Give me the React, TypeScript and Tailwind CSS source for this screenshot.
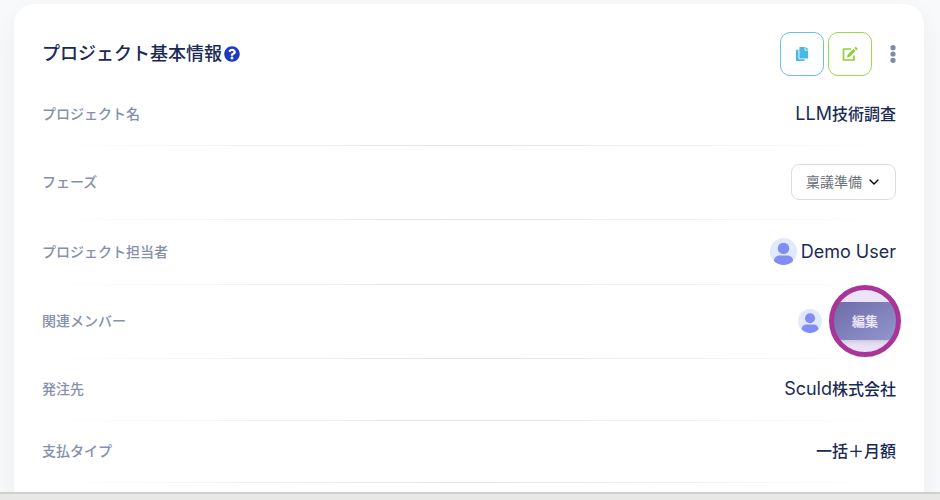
import type { ReactNode } from "react";
import { FaCopy, FaQuestionCircle } from "react-icons/fa";
import { ChevronDown } from "lucide-react";

type RowProps = {
  label: ReactNode;
  children: ReactNode;
};

function Row({ label, children }: RowProps) {
  return (
    <div>
      <div className="flex items-center justify-between pt-[18px] pb-[19px]">
        <dt className="text-sm leading-6 font-medium text-[#8590ad]">{label}</dt>
        <dd className="flex items-center text-base leading-6 font-medium text-[#1b2a55]">{children}</dd>
      </div>
      <div className="h-px bg-linear-to-r from-transparent via-[#e2e4e6] to-transparent" />
    </div>
  );
}

// latin text runs a little larger than the japanese beside it
function Latin({ children }: { children: ReactNode }) {
  return <span className="text-lg leading-6 font-normal">{children}</span>;
}

function Avatar({ className }: { className: string }) {
  return (
    <svg viewBox="0 0 26 26" className={className} aria-hidden="true">
      <circle cx="13" cy="13" r="13" fill="#e0e9fd" />
      <circle cx="13" cy="10" r="5.5" fill="#818cf5" />
      <path d="M3.800 22.200C3.800 18.800 6.500 16.800 9.500 16.800h7c3 0 5.700 2 5.700 5.400A13 13 0 0 1 3.800 22.200Z" fill="#818cf5" />
    </svg>
  );
}

function EditIcon() {
  return (
    <svg viewBox="0 0 16 16" className="size-4" aria-hidden="true">
      <path d="M9 3H1.500v11H12V9.500" fill="none" stroke="currentColor" strokeWidth="1.700" strokeLinejoin="round" />
      <path d="M11.400 2.900l2.200 2.200L7.900 10.800l-3 .8.800-3zM12.200 2.100l.9-.9a.8.800 0 0 1 1.100 0l1.100 1.100a.8.800 0 0 1 0 1.100l-.9.900z" fill="currentColor" />
    </svg>
  );
}

export default function App() {
  return (
    <div className="flex h-screen flex-col overflow-hidden bg-[#f8f9fb] font-[Inter,'Noto_Sans_CJK_JP',sans-serif]">
      <main className="min-h-0 flex-1 overflow-hidden pt-1 pr-4 pl-3.5">
        <section className="rounded-t-[20px] bg-white px-7 pt-7 pb-8 shadow-[0_10px_24px_rgba(0,0,0,0.06)]">
          <header className="mb-2 flex items-center justify-between">
            <h1 className="flex items-center text-lg font-medium text-[#1b2a55]">
              プロジェクト基本情報
              <FaQuestionCircle className="ml-0.5 size-4 text-[#1d39c4]" />
            </h1>
            <div className="flex items-center gap-1">
              <button aria-label="コピー" className="flex size-11 items-center justify-center rounded-[10px] border border-[#6cbfe6] text-[#4ab8e4]">
                <FaCopy className="size-3.5" />
              </button>
              <button aria-label="編集" className="flex size-11 items-center justify-center rounded-[10px] border border-[#9bd84f] text-[#8fd234]">
                <EditIcon />
              </button>
              <button aria-label="メニュー" className="ml-3.5 text-[#7f8ba8]">
                <svg viewBox="0 0 6 18" className="h-[18px] w-1.5" fill="currentColor">
                  <circle cx="3" cy="2.700" r="2.600" />
                  <circle cx="3" cy="9" r="2.600" />
                  <circle cx="3" cy="15.300" r="2.600" />
                </svg>
              </button>
            </div>
          </header>

          <dl>
            <Row label="プロジェクト名">
              <Latin>LLM</Latin>技術調査
            </Row>
            <Row label={<label htmlFor="phase">フェーズ</label>}>
              <div className="relative">
                <select
                  id="phase"
                  className="block h-9 w-[105px] appearance-none rounded-lg border border-[#dcdddf] bg-white pl-3.5 text-sm font-normal text-[#6b7078]"
                >
                  <option>稟議準備</option>
                </select>
                <ChevronDown className="pointer-events-none absolute top-2.5 right-3.5 size-4 text-black" />
              </div>
            </Row>
            <Row label="プロジェクト担当者">
              <Avatar className="mr-1 size-[27px]" />
              <Latin>Demo User</Latin>
            </Row>
            <Row label="関連メンバー">
              <Avatar className="mr-3 size-6" />
              <div className="relative">
                <button className="-my-px block h-[38px] w-[62px] rounded-lg bg-linear-to-br from-[#626c9c] to-[#929fca] text-[13px] font-bold text-white shadow-md">
                  編集
                </button>
                <span className="pointer-events-none absolute top-1/2 left-1/2 size-[72px] -translate-1/2 rounded-full border-[5px] border-[#a93599] bg-[#9a74dc]/20" />
              </div>
            </Row>
            <Row label="発注先">
              <Latin>Sculd</Latin>株式会社
            </Row>
            <Row label="支払タイプ">一括＋月額</Row>
          </dl>
        </section>
      </main>
      <footer className="relative h-2 shrink-0 border-t-2 border-[#cfcfcd] bg-[#e8e8e7]" />
    </div>
  );
}
